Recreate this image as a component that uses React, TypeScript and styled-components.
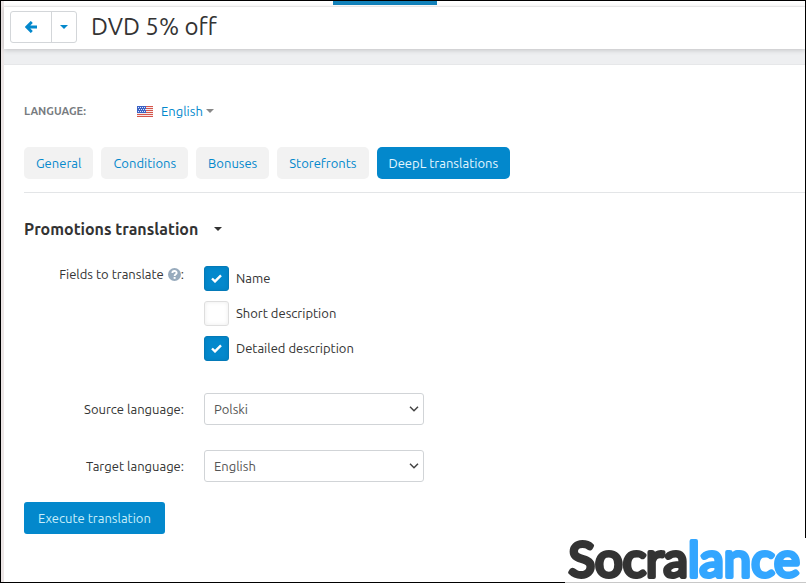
import React, { useState } from "react";
import styled, { createGlobalStyle } from "styled-components";

const BLUE = "#0388cc";
const INK = "#333333";

const GlobalStyle = createGlobalStyle`
  *, *::before, *::after { box-sizing: border-box; }
  body {
    margin: 0;
    background: #ffffff;
    color: ${INK};
    font: 13px/20px Ubuntu, "Noto Sans", sans-serif;
  }
  button, select, input { font: inherit; }
`;

const Frame = styled.div`
  position: relative;
  display: flex;
  flex-direction: column;
  min-height: 100vh;
  border: 1px solid #000000;
  background: #eeeff1;
`;

const Body = styled.div`
  flex: 1;
  display: flex;
  flex-direction: column;
  border-left: 3px solid #ece6e6;
`;

const TopStrip = styled.div`
  display: flex;
  justify-content: center;
  height: 6px;
  background: #ffffff;
  border-bottom: 1px solid #f3f3f4;
`;

const LoadingBar = styled.div`
  width: 104px;
  height: 4px;
  margin-right: 40px;
  background: #1182bb;
`;

const Header = styled.header`
  display: flex;
  align-items: center;
  gap: 14px;
  height: 42px;
  padding: 0 6px 2px;
  background: #ffffff;
  box-shadow: 0 1px 5px rgba(0, 0, 0, 0.2);
`;

const ButtonGroup = styled.div`
  display: flex;
  height: 32px;
  border: 1px solid #d3d6d9;
  border-radius: 3px;
`;

const GroupButton = styled.button<{ $width: number }>`
  display: flex;
  align-items: center;
  justify-content: center;
  width: ${(p) => p.$width}px;
  padding: 0;
  border: 0;
  background: transparent;
  color: ${BLUE};
  cursor: pointer;

  & + & { border-left: 1px solid #d3d6d9; }
`;

const Title = styled.h1`
  margin: 0;
  font-size: 24px;
  line-height: 32px;
  font-weight: 400;
`;

const Panel = styled.main`
  flex: 1;
  margin-top: 15px;
  padding: 36px 0 48px 20px;
  border-top: 1px solid #e6e7e9;
  background: #ffffff;
`;

const LanguageRow = styled.div`
  display: flex;
  align-items: center;
  height: 20px;
`;

const LanguageLabel = styled.span`
  width: 113px;
  color: #777b80;
  font-size: 11px;
  font-weight: 700;
`;

const LanguagePicker = styled.button`
  display: flex;
  align-items: center;
  padding: 0;
  border: 0;
  background: transparent;
  color: ${BLUE};
  cursor: pointer;
`;

const LanguageName = styled.span`
  margin: 0 3px 0 8px;
`;

const Tabs = styled.nav`
  display: flex;
  gap: 8px;
  margin-top: 26px;
  padding-bottom: 13px;
  border-bottom: 1px solid #e3e5e7;
`;

const Tab = styled.button<{ $active: boolean }>`
  height: 32px;
  padding: 0 12px;
  border: 0;
  border-radius: 5px;
  background: ${(p) => (p.$active ? BLUE : "#f2f2f2")};
  color: ${(p) => (p.$active ? "#e6f7ff" : BLUE)};
  white-space: nowrap;
  cursor: pointer;
`;

const SectionTitle = styled.h2`
  display: flex;
  align-items: center;
  gap: 16px;
  margin: 26px 0 0;
  font-size: 16px;
  line-height: 20px;
  font-weight: 700;
`;

const Form = styled.form`
  display: flex;
  flex-direction: column;
  align-items: flex-start;
`;

const Field = styled.div<{ $top: number }>`
  display: grid;
  grid-template-columns: 160px 220px;
  column-gap: 20px;
  align-items: center;
  margin-top: ${(p) => p.$top}px;
`;

const FieldLabel = styled.label`
  text-align: right;
  white-space: nowrap;
`;

const CheckField = styled.fieldset`
  display: grid;
  grid-template-columns: 160px 220px;
  column-gap: 20px;
  margin: 27px 0 0;
  padding: 0;
  border: 0;
`;

const GroupLabel = styled.div`
  display: flex;
  justify-content: flex-end;
  align-items: center;
  height: 16px;
  white-space: nowrap;

  svg { margin-left: 4px; }
`;

const CheckList = styled.div`
  display: flex;
  flex-direction: column;
  gap: 10px;
`;

const CheckLabel = styled.label`
  display: flex;
  align-items: flex-start;
  gap: 7px;
  height: 25px;
  line-height: 24px;
  white-space: nowrap;
`;

const CheckWrap = styled.span`
  display: grid;

  > * { grid-area: 1 / 1; place-self: center; }
  svg { pointer-events: none; }
`;

const CheckBox = styled.input`
  appearance: none;
  width: 25px;
  height: 25px;
  margin: 0;
  border: 1px solid #dedede;
  border-radius: 3px;
  background: #ffffff;
  box-shadow: inset 0 0 4px rgba(0, 0, 0, 0.08);

  &:checked {
    border-color: #047ab8;
    background: ${BLUE};
  }
`;

const SelectWrap = styled.span`
  display: grid;
  align-items: center;

  > * { grid-area: 1 / 1; }
  svg { justify-self: end; margin-right: 5px; pointer-events: none; }
`;

const Select = styled.select`
  appearance: none;
  width: 100%;
  height: 32px;
  padding: 0 24px 0 9px;
  border: 1px solid #d1d4d7;
  border-radius: 3px;
  background: #ffffff;
  color: #555555;
`;

const SubmitButton = styled.button`
  height: 32px;
  margin-top: 20px;
  padding: 0 14px;
  border: 0;
  border-radius: 3px;
  background: ${BLUE};
  color: #c9effb;
  cursor: pointer;
`;

const Watermark = styled.div`
  position: absolute;
  right: -1px;
  bottom: -1px;
  border-bottom: 1px solid #c8c8c8;
  background: #ffffff;

  svg { display: block; }
`;

const WordmarkText = styled.text`
  font: 400 49px Lato, sans-serif;
  stroke-width: 4px;
  stroke-linejoin: round;
`;

function Wordmark() {
  return (
    <svg width="241" height="44" viewBox="0 0 241 44" role="img" aria-label="Socralance">
      <WordmarkText x="235" y="39" textAnchor="end">
        <tspan fill="#333333" stroke="#333333">Socra</tspan>
        <tspan fill="#33a6ff" stroke="#33a6ff">lance</tspan>
      </WordmarkText>
    </svg>
  );
}

function Caret({ color }: { color: string }) {
  return (
    <svg width="8" height="4" viewBox="0 0 8 4" aria-hidden="true">
      <path d="M0 0H8L4 4Z" fill={color} />
    </svg>
  );
}

function ArrowLeft() {
  return (
    <svg width="12" height="12" viewBox="0 0 12 12" fill="none" stroke="currentColor" aria-hidden="true">
      <path d="M6.8 .9L1.8 6L6.8 11.1M2 6H12" strokeWidth="2.8" />
    </svg>
  );
}

function Flag() {
  return (
    <svg width="16" height="11" viewBox="0 0 16 11" aria-hidden="true">
      <rect width="16" height="11" fill="#f6e9e8" />
      <path d="M0 .5H16M0 2.5H16M0 4.5H16M0 6.5H16M0 8.5H16M0 10.5H16" stroke="#d5554b" />
      <rect width="9" height="7" fill="#3c62c4" />
      <path d="M1 1.5H9M2 3.5H9M1 5.5H9" stroke="#dce6fb" strokeDasharray="1 1" />
    </svg>
  );
}

function Help() {
  return (
    <svg width="13" height="13" viewBox="0 0 12 12" aria-hidden="true">
      <circle cx="6" cy="6" r="6" fill="#98abbd" />
      <path d="M4 4.6C4 2.2 8 2.2 8 4.5C8 5.8 6.1 5.8 6.1 7.4" fill="none" stroke="#fff" strokeWidth="1.7" />
      <rect x="5.2" y="8.3" width="1.8" height="1.7" fill="#fff" />
    </svg>
  );
}

function Tick() {
  return (
    <svg width="11" height="9" viewBox="0 0 11 9" aria-hidden="true">
      <path d="M1 4.5L4 7.4L10 1.3" fill="none" stroke="#fff" strokeWidth="2.4" />
    </svg>
  );
}

function Chevron() {
  return (
    <svg width="10" height="6" viewBox="0 0 10 6" aria-hidden="true">
      <path d="M1 .8L5 4.8L9 .8" fill="none" stroke="#444" strokeWidth="1.5" />
    </svg>
  );
}

const TABS = ["General", "Conditions", "Bonuses", "Storefronts", "DeepL translations"];

const FIELDS = [
  { label: "Name", on: true },
  { label: "Short description", on: false },
  { label: "Detailed description", on: true },
];

function CheckRow({ label, on }: { label: string; on: boolean }) {
  const [checked, setChecked] = useState(on);
  return (
    <CheckLabel>
      <CheckWrap>
        <CheckBox type="checkbox" checked={checked} onChange={() => setChecked(!checked)} />
        {checked && <Tick />}
      </CheckWrap>
      {label}
    </CheckLabel>
  );
}

function SelectField({ id, label, value, top }: { id: string; label: string; value: string; top: number }) {
  return (
    <Field $top={top}>
      <FieldLabel htmlFor={id}>{label}</FieldLabel>
      <SelectWrap>
        <Select id={id} defaultValue={value}>
          <option>Polski</option>
          <option>English</option>
        </Select>
        <Chevron />
      </SelectWrap>
    </Field>
  );
}

export default function App() {
  const [tab, setTab] = useState("DeepL translations");
  return (
    <Frame>
      <GlobalStyle />
      <Body>
        <TopStrip>
          <LoadingBar />
        </TopStrip>
        <Header>
          <ButtonGroup>
            <GroupButton $width={40} type="button" aria-label="Back">
              <ArrowLeft />
            </GroupButton>
            <GroupButton $width={25} type="button" aria-label="More">
              <Caret color={BLUE} />
            </GroupButton>
          </ButtonGroup>
          <Title>DVD 5% off</Title>
        </Header>
        <Panel>
          <LanguageRow>
            <LanguageLabel>LANGUAGE:</LanguageLabel>
            <LanguagePicker type="button">
              <Flag />
              <LanguageName>English</LanguageName>
              <Caret color="#888888" />
            </LanguagePicker>
          </LanguageRow>
          <Tabs>
            {TABS.map((name) => (
              <Tab key={name} type="button" $active={name === tab} onClick={() => setTab(name)}>
                {name}
              </Tab>
            ))}
          </Tabs>
          <SectionTitle>
            Promotions translation
            <Caret color={INK} />
          </SectionTitle>
          <Form onSubmit={(e) => e.preventDefault()}>
            <CheckField aria-labelledby="fields-label">
              <GroupLabel id="fields-label">
                Fields to translate
                <Help />:
              </GroupLabel>
              <CheckList>
                {FIELDS.map((f) => (
                  <CheckRow key={f.label} {...f} />
                ))}
              </CheckList>
            </CheckField>
            <SelectField id="source" label="Source language:" value="Polski" top={32} />
            <SelectField id="target" label="Target language:" value="English" top={25} />
            <SubmitButton type="submit">Execute translation</SubmitButton>
          </Form>
        </Panel>
      </Body>
      <Watermark>
        <Wordmark />
      </Watermark>
    </Frame>
  );
}
